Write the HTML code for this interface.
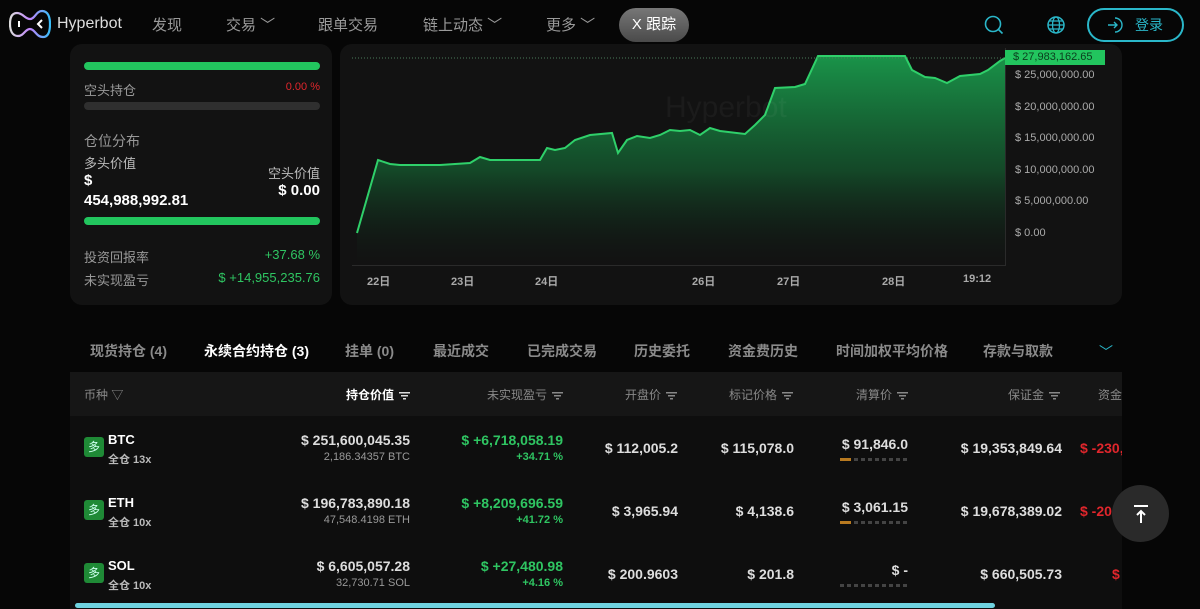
<!DOCTYPE html>
<html><head><meta charset="utf-8"><style>
*{box-sizing:border-box;margin:0;padding:0}
body{width:1200px;height:609px;overflow:hidden;background:#060606;font-family:"Liberation Sans","Noto Sans CJK SC",sans-serif;color:#ddd;position:relative}
.abs{position:absolute}
.nav{font-size:15px;color:#9a9a9a;top:14px}
.card{background:#121212;border-radius:12px}
.bar{height:8px;border-radius:4px;position:absolute;left:84px;width:236px}
.lbl{font-size:13px;color:#999}
.tab{font-size:14px;color:#8a8a8a;font-weight:bold;top:341px}
.th{font-size:12px;color:#888;top:386px}
.num{font-size:14px;font-weight:bold;color:#ddd;text-align:right}
.sub{font-size:11px;color:#999;text-align:right}
.g{color:#2fc562}.r{color:#e0262c}
.sort{display:inline-block;width:11px;height:8px;vertical-align:middle;margin-left:5px;background:linear-gradient(#888,#888) 0 0/11px 1.5px no-repeat,linear-gradient(#888,#888) 2px 3px/7px 1.5px no-repeat,linear-gradient(#888,#888) 4px 6px/3px 1.5px no-repeat}
.ax{font-size:11px;color:#aaa;left:1015px}
.xl{font-size:11px;color:#aaa;top:273px;font-weight:bold}
.badge{width:20px;height:20px;background:#1f8a36;border-radius:3px;color:#cfe;font-size:12px;text-align:center;line-height:20px;left:84px}
.coin{left:108px;font-size:13px;font-weight:bold;color:#fff}
.lev{left:108px;font-size:11px;font-weight:bold;color:#bbb}
.dots{height:3px;width:68px;background:repeating-linear-gradient(90deg,#444 0 4px,transparent 4px 7px)}
</style></head><body>
<svg class="abs" style="left:9px;top:9px" width="42" height="30" viewBox="0 0 42 30"><defs><linearGradient id="lg" x1="0" x2="1"><stop offset="0" stop-color="#ddd"/><stop offset=".5" stop-color="#c084fc"/><stop offset="1" stop-color="#38bdf8"/></linearGradient></defs><path d="M8 4 C2 4 1 10 1 15 C1 21 3 27 9 27 C15 27 16 20 21 20 C26 20 27 28 34 28 C40 28 41 21 41 15 C41 8 39 2 33 2 C27 2 26 10 21 10 C16 10 14 4 8 4Z" fill="none" stroke="url(#lg)" stroke-width="2.2"/><path d="M10 12v6" stroke="#fff" stroke-width="2"/><path d="M33 11l-4 4 4 4" stroke="#fff" stroke-width="2" fill="none"/></svg>
<div class="abs" style="left:57px;top:15px;font-size:16px;color:#ddd">Hyperbot</div>
<div class="abs nav" style="left:152px">发现</div>
<div class="abs nav" style="left:226px">交易 ﹀</div>
<div class="abs nav" style="left:318px">跟单交易</div>
<div class="abs nav" style="left:423px">链上动态 ﹀</div>
<div class="abs nav" style="left:546px">更多 ﹀</div>
<div class="abs" style="left:619px;top:8px;width:70px;height:34px;border-radius:17px;background:linear-gradient(#777,#4a4a4a);color:#fff;font-size:15px;line-height:34px;text-align:center">X 跟踪</div>
<svg class="abs" style="left:984px;top:15px" width="20" height="20"><circle cx="9" cy="9" r="7.5" fill="none" stroke="#2ab7c9" stroke-width="1.6"/><path d="M14.5 14.5l4 4" stroke="#2ab7c9" stroke-width="1.6"/></svg>
<svg class="abs" style="left:1046px;top:15px" width="20" height="20"><circle cx="10" cy="10" r="8" fill="none" stroke="#2ab7c9" stroke-width="1.5"/><ellipse cx="10" cy="10" rx="3.5" ry="8" fill="none" stroke="#2ab7c9" stroke-width="1.3"/><path d="M2 10h16M3 6h14M3 14h14" stroke="#2ab7c9" stroke-width="1.2"/></svg>
<div class="abs" style="left:1087px;top:8px;width:97px;height:34px;border:2px solid #2ab7c9;border-radius:17px;color:#2ab7c9;font-size:14px;line-height:30px;padding-left:46px">登录</div>
<svg class="abs" style="left:1107px;top:16px" width="18" height="18"><path d="M8 2a7 7 0 1 1 0 14" fill="none" stroke="#2ab7c9" stroke-width="1.4"/><path d="M1 9h9M7 6l3 3-3 3" fill="none" stroke="#2ab7c9" stroke-width="1.4"/></svg>

<div class="abs card" style="left:70px;top:44px;width:262px;height:261px"></div>
<div class="bar" style="top:62px;background:#22c55e"></div>
<div class="abs lbl" style="left:84px;top:80px">空头持仓</div>
<div class="abs r" style="left:270px;top:81px;font-size:11px;width:50px;text-align:right">0.00 %</div>
<div class="bar" style="top:102px;background:#2f2f2f"></div>
<div class="abs lbl" style="left:84px;top:131px;font-size:14px">仓位分布</div>
<div class="abs lbl" style="left:84px;top:153px;color:#bbb">多头价值</div>
<div class="abs" style="left:84px;top:172px;font-size:15px;font-weight:bold;color:#fff">$</div>
<div class="abs" style="left:84px;top:192px;font-size:15px;font-weight:bold;color:#fff">454,988,992.81</div>
<div class="abs lbl" style="left:260px;top:163px;width:60px;text-align:right;color:#bbb">空头价值</div>
<div class="abs" style="left:240px;top:182px;width:80px;text-align:right;font-size:15px;font-weight:bold;color:#fff">$ 0.00</div>
<div class="bar" style="top:217px;background:#22c55e"></div>
<div class="abs lbl" style="left:84px;top:247px">投资回报率</div>
<div class="abs g" style="left:220px;top:247px;width:100px;text-align:right;font-size:13px">+37.68 %</div>
<div class="abs lbl" style="left:84px;top:270px">未实现盈亏</div>
<div class="abs g" style="left:180px;top:270px;width:140px;text-align:right;font-size:13px">$ +14,955,235.76</div>

<div class="abs card" style="left:340px;top:44px;width:782px;height:261px"></div>
<svg class="abs" style="left:0;top:0" width="1200" height="309">
<defs><linearGradient id="fg" x1="0" y1="0" x2="0" y2="1"><stop offset="0" stop-color="#1a9a4c" stop-opacity=".95"/><stop offset=".55" stop-color="#14552d" stop-opacity=".8"/><stop offset="1" stop-color="#121212" stop-opacity=".2"/></linearGradient></defs>
<path d="M357,233 L378,160 L390,164 L400,165 L440,165 L470,163 L480,157 L490,160 L540,160 L547,148 L555,150 L565,148 L575,140 L590,135 L612,133 L618,153 L627,140 L637,136 L650,138 L660,135 L670,130 L680,131 L690,130 L700,135 L710,128 L720,131 L745,134 L755,125 L765,115 L775,88 L795,87 L805,84 L818,56 L905,56 L912,70 L925,77 L935,78 L947,83 L960,76 L980,74 L988,70 L1000,61 L1005,58 L1005,265 L357,265Z" fill="url(#fg)"/>
<path d="M357,233 L378,160 L390,164 L400,165 L440,165 L470,163 L480,157 L490,160 L540,160 L547,148 L555,150 L565,148 L575,140 L590,135 L612,133 L618,153 L627,140 L637,136 L650,138 L660,135 L670,130 L680,131 L690,130 L700,135 L710,128 L720,131 L745,134 L755,125 L765,115 L775,88 L795,87 L805,84 L818,56 L905,56 L912,70 L925,77 L935,78 L947,83 L960,76 L980,74 L988,70 L1000,61 L1005,58" fill="none" stroke="#2fd06a" stroke-width="2"/>
<path d="M352,58H1005" stroke="#4a7a5a" stroke-width="1" stroke-dasharray="1,2"/>
<path d="M352,265.5H1005.5V48" stroke="#2a2a2a" fill="none"/>
<text x="665" y="117" font-family="Liberation Sans" font-size="30" fill="#ffffff" fill-opacity=".04">Hyperbot</text>
</svg>
<div class="abs" style="left:1005px;top:50px;width:100px;height:15px;background:#22c55e;font-size:11px;line-height:14px;padding-left:8px;overflow:hidden;color:#0b3d1d">$ 27,983,162.65</div>
<div class="abs ax" style="top:69px">$ 25,000,000.00</div>
<div class="abs ax" style="top:101px">$ 20,000,000.00</div>
<div class="abs ax" style="top:132px">$ 15,000,000.00</div>
<div class="abs ax" style="top:164px">$ 10,000,000.00</div>
<div class="abs ax" style="top:195px">$ 5,000,000.00</div>
<div class="abs ax" style="top:227px">$ 0.00</div>
<div class="abs xl" style="left:367px">22日</div>
<div class="abs xl" style="left:451px">23日</div>
<div class="abs xl" style="left:535px">24日</div>
<div class="abs xl" style="left:692px">26日</div>
<div class="abs xl" style="left:777px">27日</div>
<div class="abs xl" style="left:882px">28日</div>
<div class="abs xl" style="left:963px">19:12</div>

<div class="abs tab" style="left:90px">现货持仓 (4)</div>
<div class="abs tab" style="left:204px;color:#fff">永续合约持仓 (3)</div>
<div class="abs tab" style="left:345px">挂单 (0)</div>
<div class="abs tab" style="left:433px">最近成交</div>
<div class="abs tab" style="left:527px">已完成交易</div>
<div class="abs tab" style="left:634px">历史委托</div>
<div class="abs tab" style="left:728px">资金费历史</div>
<div class="abs tab" style="left:836px">时间加权平均价格</div>
<div class="abs tab" style="left:983px">存款与取款</div>
<div class="abs" style="left:1099px;top:342px;color:#2ab7c9;font-size:14px">﹀</div>

<div class="abs" style="left:70px;top:372px;width:1052px;height:237px;background:#0e0e0e"></div>
<div class="abs" style="left:70px;top:372px;width:1052px;height:44px;background:#161616"></div>
<div class="abs th" style="left:84px">币种 <span style="font-size:12px">▽</span></div>
<div class="abs th" style="left:300px;width:110px;text-align:right;color:#fff;font-weight:bold">持仓价值<span class="sort" style="background:linear-gradient(#ddd,#ddd) 0 0/11px 1.5px no-repeat,linear-gradient(#ddd,#ddd) 2px 3px/7px 1.5px no-repeat,linear-gradient(#ddd,#ddd) 4px 6px/3px 1.5px no-repeat"></span></div>
<div class="abs th" style="left:450px;width:113px;text-align:right">未实现盈亏<span class="sort"></span></div>
<div class="abs th" style="left:590px;width:87px;text-align:right">开盘价<span class="sort"></span></div>
<div class="abs th" style="left:700px;width:93px;text-align:right">标记价格<span class="sort"></span></div>
<div class="abs th" style="left:820px;width:88px;text-align:right">清算价<span class="sort"></span></div>
<div class="abs th" style="left:960px;width:100px;text-align:right">保证金<span class="sort"></span></div>
<div class="abs th" style="left:1098px">资金费</div>

<div class="abs badge" style="top:437px">多</div><div class="abs coin" style="top:432px">BTC</div><div class="abs lev" style="top:451px">全仓 13x</div>
<div class="abs num" style="left:250px;width:160px;top:432px">$ 251,600,045.35</div><div class="abs sub" style="left:250px;width:160px;top:451px">2,186.34357 BTC</div>
<div class="abs num g" style="left:420px;width:143px;top:432px">$ +6,718,058.19</div><div class="abs sub g" style="left:420px;width:143px;top:451px;font-weight:bold">+34.71 %</div>
<div class="abs num" style="left:578px;width:100px;top:440px">$ 112,005.2</div>
<div class="abs num" style="left:690px;width:104px;top:440px">$ 115,078.0</div>
<div class="abs num" style="left:800px;width:108px;top:436px">$ 91,846.0</div><div class="abs dots" style="left:840px;top:458px;background:linear-gradient(90deg,#b87a20 0 11px,transparent 11px),repeating-linear-gradient(90deg,#444 0 4px,transparent 4px 7px)"></div>
<div class="abs num" style="left:930px;width:132px;top:440px">$ 19,353,849.64</div>
<div class="abs num r" style="left:1080px;top:440px">$ -230,9</div>

<div class="abs badge" style="top:500px">多</div><div class="abs coin" style="top:495px">ETH</div><div class="abs lev" style="top:514px">全仓 10x</div>
<div class="abs num" style="left:250px;width:160px;top:495px">$ 196,783,890.18</div><div class="abs sub" style="left:250px;width:160px;top:514px">47,548.4198 ETH</div>
<div class="abs num g" style="left:420px;width:143px;top:495px">$ +8,209,696.59</div><div class="abs sub g" style="left:420px;width:143px;top:514px;font-weight:bold">+41.72 %</div>
<div class="abs num" style="left:578px;width:100px;top:503px">$ 3,965.94</div>
<div class="abs num" style="left:690px;width:104px;top:503px">$ 4,138.6</div>
<div class="abs num" style="left:800px;width:108px;top:499px">$ 3,061.15</div><div class="abs dots" style="left:840px;top:521px;background:linear-gradient(90deg,#b87a20 0 11px,transparent 11px),repeating-linear-gradient(90deg,#444 0 4px,transparent 4px 7px)"></div>
<div class="abs num" style="left:930px;width:132px;top:503px">$ 19,678,389.02</div>
<div class="abs num r" style="left:1080px;top:503px">$ -202</div>

<div class="abs badge" style="top:563px">多</div><div class="abs coin" style="top:558px">SOL</div><div class="abs lev" style="top:577px">全仓 10x</div>
<div class="abs num" style="left:250px;width:160px;top:558px">$ 6,605,057.28</div><div class="abs sub" style="left:250px;width:160px;top:577px">32,730.71 SOL</div>
<div class="abs num g" style="left:420px;width:143px;top:558px">$ +27,480.98</div><div class="abs sub g" style="left:420px;width:143px;top:577px;font-weight:bold">+4.16 %</div>
<div class="abs num" style="left:578px;width:100px;top:566px">$ 200.9603</div>
<div class="abs num" style="left:690px;width:104px;top:566px">$ 201.8</div>
<div class="abs num" style="left:800px;width:108px;top:562px">$ -</div><div class="abs dots" style="left:840px;top:584px"></div>
<div class="abs num" style="left:930px;width:132px;top:566px">$ 660,505.73</div>
<div class="abs num r" style="left:1112px;top:566px">$</div>

<div class="abs" style="left:1122px;top:372px;width:78px;height:237px;background:#060606"></div>
<div class="abs" style="left:75px;top:603px;width:920px;height:5px;border-radius:3px;background:#6fd3e0"></div>
<div class="abs" style="left:1112px;top:485px;width:57px;height:57px;border-radius:50%;background:#2a2a2a"></div>
<svg class="abs" style="left:1130px;top:503px" width="22" height="22"><path d="M4 3h14" stroke="#fff" stroke-width="2"/><path d="M11 20V8M7 12l4-4 4 4" stroke="#fff" stroke-width="2" fill="none"/></svg>
</body></html>
